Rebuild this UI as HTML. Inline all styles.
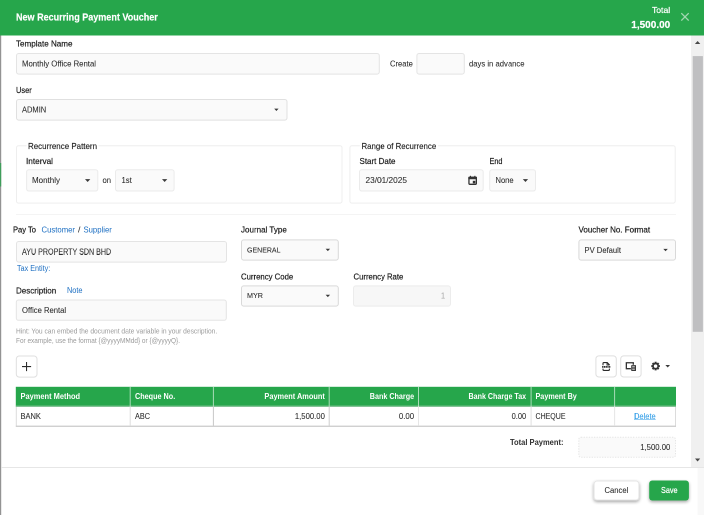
<!DOCTYPE html>
<html>
<head>
<meta charset="utf-8">
<title>New Recurring Payment Voucher</title>
<style>
*{box-sizing:border-box;margin:0;padding:0}
html,body{width:704px;height:515px;overflow:hidden;background:#fff}
body{font-family:"Liberation Sans",sans-serif;font-size:9px;color:#222;position:relative}
.a{position:absolute}
.t{position:absolute;white-space:nowrap;line-height:1;display:block}
.b{font-weight:bold}
.m{-webkit-text-stroke:0.2px currentColor}
.l{-webkit-text-stroke:0.13px currentColor;color:#222}
.s{-webkit-text-stroke:0.2px currentColor}
.x{color:#2c2c2c;-webkit-text-stroke:0.07px currentColor}
.m{color:#1c1c1c}
.w{color:#fff}
.k{color:#1b6ec2}
.h{color:#9b9b9b}
.g{color:#a8a8a8}
.d{color:#2397e6;text-decoration:underline}
</style>
</head>
<body>
<div id="root" style="position:absolute;left:0;top:0;width:1408px;height:1030px;overflow:hidden;transform-origin:0 0;transform:scale(0.5);will-change:transform;">
<div style="position:absolute;left:0;top:0;width:704px;height:515px;zoom:2">
<svg style="position:absolute;left:0;top:0" width="704" height="515" viewBox="0 0 704 515">
<defs><filter id="sh" x="-20%" y="-30%" width="140%" height="180%"><feDropShadow dx="0" dy="1.5" stdDeviation="1.7" flood-color="#000" flood-opacity="0.36"/></filter></defs>
<rect x="0.00" y="0.00" width="704.00" height="35.50" rx="0" fill="#26a64b"/>
<path d="M681.3 13.2L688.7 20.6M688.7 13.2L681.3 20.6" stroke="#a3d8b2" stroke-width="1.3" fill="none"/>
<rect x="0.00" y="35.50" width="1.20" height="479.50" rx="0" fill="#939393"/>
<rect x="0.00" y="163.00" width="1.20" height="23.50" rx="0" fill="#3f9d5b"/>
<rect x="691.00" y="35.50" width="13.00" height="431.50" rx="0" fill="#f0f0f0"/>
<rect x="692.70" y="56.10" width="10.20" height="275.70" rx="0" fill="#bfbfc1"/>
<path d="M694.9 44L697.6 41L700.3 44z" fill="#484848"/>
<path d="M695 458.5L697.6 461.5L700.2 458.5z" fill="#484848"/>
<rect x="16.50" y="53.50" width="362.80" height="20.60" rx="2.2" fill="#fafafa" stroke="#e4e4e4" stroke-width="1" />
<rect x="416.90" y="53.50" width="47.40" height="20.60" rx="2.2" fill="#fafafa" stroke="#e4e4e4" stroke-width="1" />
<rect x="16.50" y="99.50" width="270.50" height="20.60" rx="2.2" fill="#fafafa" stroke="#e0e0e0" stroke-width="1" />
<path d="M274.20 108.60h4.4l-2.20 2.4z" fill="#3a3a3a"/>
<rect x="16.50" y="145.80" width="325.50" height="57.30" rx="2" fill="none" stroke="#eeeeee" stroke-width="1" />
<rect x="26.50" y="144.00" width="72.00" height="4.00" rx="0" fill="#fff"/>
<rect x="349.90" y="145.80" width="325.30" height="57.30" rx="2" fill="none" stroke="#eeeeee" stroke-width="1" />
<rect x="359.90" y="144.00" width="78.10" height="4.00" rx="0" fill="#fff"/>
<rect x="26.60" y="169.70" width="71.20" height="21.30" rx="2.2" fill="#fafafa" stroke="#ebebeb" stroke-width="1" />
<path d="M85.00 179.10h5.3l-2.65 2.9z" fill="#3a3a3a"/>
<rect x="115.50" y="169.70" width="58.60" height="21.30" rx="2.2" fill="#fafafa" stroke="#ebebeb" stroke-width="1" />
<path d="M162.00 179.10h5.3l-2.65 2.9z" fill="#3a3a3a"/>
<rect x="359.50" y="169.70" width="123.70" height="21.30" rx="2.2" fill="#fafafa" stroke="#ebebeb" stroke-width="1" />
<rect x="489.70" y="169.70" width="45.80" height="21.30" rx="2.2" fill="#fafafa" stroke="#ebebeb" stroke-width="1" />
<path d="M522.80 179.10h5.3l-2.65 2.9z" fill="#3a3a3a"/>
<g transform="translate(468.3 175.8)"><rect x="0.65" y="1.5" width="7.4" height="7" rx="0.9" fill="none" stroke="#333" stroke-width="1.3"/><rect x="0" y="0.9" width="8.7" height="2.5" rx="0.7" fill="#333"/><rect x="1.6" y="0" width="1.1" height="1.6" fill="#333"/><rect x="6" y="0" width="1.1" height="1.6" fill="#333"/><rect x="4.5" y="5" width="2.5" height="2.5" fill="#333"/></g>
<rect x="16.00" y="214.00" width="660.00" height="1.00" rx="0" fill="#f4f4f4"/>
<rect x="16.50" y="241.50" width="210.00" height="20.60" rx="2.2" fill="#fafafa" stroke="#e4e4e4" stroke-width="1" />
<rect x="241.50" y="239.90" width="96.80" height="20.20" rx="2.2" fill="#fafafa" stroke="#d9d9d9" stroke-width="1" />
<path d="M325.60 248.80h4.5l-2.25 2.3z" fill="#3a3a3a"/>
<rect x="578.90" y="239.90" width="96.60" height="20.20" rx="2.2" fill="#fafafa" stroke="#d9d9d9" stroke-width="1" />
<path d="M663.30 248.90h4.5l-2.25 2.3z" fill="#3a3a3a"/>
<rect x="241.50" y="285.90" width="96.80" height="20.20" rx="2.2" fill="#fafafa" stroke="#d9d9d9" stroke-width="1" />
<path d="M325.60 294.80h4.5l-2.25 2.3z" fill="#3a3a3a"/>
<rect x="353.50" y="285.90" width="97.00" height="20.20" rx="2.2" fill="#f7f7f7" stroke="#ececec" stroke-width="1" />
<rect x="16.30" y="300.00" width="210.00" height="20.30" rx="2.2" fill="#fafafa" stroke="#e4e4e4" stroke-width="1" />
<rect x="16.30" y="356.00" width="20.70" height="21.10" rx="3" fill="#fff" stroke="#dfdfdf" stroke-width="1" />
<path d="M26.55 362V371.1M22 366.55H31.1" stroke="#2a2a2a" stroke-width="1.05" fill="none"/>
<rect x="595.90" y="355.90" width="20.40" height="21.10" rx="3" fill="#fff" stroke="#dfdfdf" stroke-width="1" />
<rect x="620.70" y="355.90" width="20.40" height="21.10" rx="3" fill="#fff" stroke="#dfdfdf" stroke-width="1" />
<g transform="translate(601.7 362)" fill="none" stroke="#2a2a2a"><path d="M1.3 3.2V1.5Q1.3 0.6 2.2 0.6H5.5L7.7 2.8V3.2" stroke-width="1.1"/><path d="M5.3 0.8V3H7.5" stroke-width="0.9"/><path d="M1.3 6.6V7.5Q1.3 8.4 2.2 8.4H6.8Q7.7 8.4 7.7 7.5V6.6" stroke-width="1.1"/><path d="M0.4 4.9H8.6" stroke-width="1.7" stroke-dasharray="1.3 0.45"/></g>
<g transform="translate(625.7 362)"><path d="M5.2 6.7H0.65V0.75H7.6V2.8" fill="none" stroke="#333" stroke-width="1.3"/><rect x="5.5" y="3.1" width="4.6" height="5.9" rx="0.6" fill="#3a3a3a"/><path d="M6.5 4.6H9.1M6.5 6H9.1M6.5 7.4H9.1" stroke="#d8d8d8" stroke-width="0.7"/></g>
<g transform="translate(655.6 366.1)"><circle r="2.6" fill="none" stroke="#333" stroke-width="1.7"/><g stroke="#333" stroke-width="2"><path d="M0 -4.3V-3M0 4.3V3M-4.3 0H-3M4.3 0H3M-3.05 -3.05L-2.1 -2.1M3.05 3.05L2.1 2.1M-3.05 3.05L-2.1 2.1M3.05 -3.05L2.1 -2.1"/></g></g>
<path d="M665.40 365.00h4.6l-2.30 2.5z" fill="#3a3a3a"/>
<rect x="15.80" y="386.80" width="660.20" height="19.50" rx="0" fill="#26a64b"/>
<rect x="16.3" y="406.3" width="659.2" height="19.9" fill="#fff" stroke="#dcdcdc" stroke-width="1"/>
<rect x="15.80" y="406.30" width="660.20" height="0.50" rx="0" fill="#26a64b"/>
<path d="M15.80 426.20L676.00 426.20" stroke="#c6c6c6" stroke-width="1" fill="none"/>
<path d="M130.20 386.80L130.20 406.30" stroke="#a9dcb8" stroke-width="1" fill="none"/>
<path d="M130.20 406.30L130.20 425.80" stroke="#dedede" stroke-width="1" fill="none"/>
<path d="M213.40 386.80L213.40 406.30" stroke="#a9dcb8" stroke-width="1" fill="none"/>
<path d="M213.40 406.30L213.40 425.80" stroke="#c8c8c8" stroke-width="1" fill="none"/>
<path d="M329.20 386.80L329.20 406.30" stroke="#a9dcb8" stroke-width="1" fill="none"/>
<path d="M329.20 406.30L329.20 425.80" stroke="#cecece" stroke-width="1" fill="none"/>
<path d="M418.50 386.80L418.50 406.30" stroke="#a9dcb8" stroke-width="1" fill="none"/>
<path d="M418.50 406.30L418.50 425.80" stroke="#e6e6e6" stroke-width="1" fill="none"/>
<path d="M531.10 386.80L531.10 406.30" stroke="#a9dcb8" stroke-width="1" fill="none"/>
<path d="M531.10 406.30L531.10 425.80" stroke="#e0e0e0" stroke-width="1" fill="none"/>
<path d="M614.60 386.80L614.60 406.30" stroke="#a9dcb8" stroke-width="1" fill="none"/>
<path d="M614.60 406.30L614.60 425.80" stroke="#e6e6e6" stroke-width="1" fill="none"/>
<rect x="578.80" y="437.30" width="96.70" height="20.00" rx="2.2" fill="#fafafa" stroke="#e5e5e5" stroke-width="1" stroke-dasharray="1.3 1.3"/>
<rect x="1.20" y="467.00" width="702.80" height="1.00" rx="0" fill="#e6e6e6"/>
<rect x="697.50" y="468.00" width="6.50" height="47.00" rx="0" fill="#f8f8f8"/>
<rect x="594.1" y="481" width="44.8" height="19" rx="3" fill="#fff" stroke="#e6e6e6" stroke-width="1" filter="url(#sh)"/>
<rect x="649.2" y="480.5" width="39.7" height="20" rx="3" fill="#26a64b" filter="url(#sh)"/>
</svg>
<span class="t b w s" style="top:11.77px;font-size:10.2px;left:16.00px;transform-origin:0 0;transform:scaleX(0.8854);">New Recurring Payment Voucher</span>
<span class="t m w" style="top:6.22px;font-size:8.6px;right:34.00px;transform-origin:100% 0;transform:scaleX(1.0024);">Total</span>
<span class="t b w s" style="top:20.09px;font-size:9.7px;right:34.00px;transform-origin:100% 0;transform:scaleX(1.0333);">1,500.00</span>
<span class="t m" style="top:39.66px;font-size:8.2px;left:16.00px;transform-origin:0 0;transform:scaleX(0.9843);">Template Name</span>
<span class="t x" style="top:60.07px;font-size:8.3px;left:22.00px;transform-origin:0 0;transform:scaleX(0.9347);">Monthly Office Rental</span>
<span class="t x" style="top:60.07px;font-size:8.3px;left:390.00px;transform-origin:0 0;transform:scaleX(0.9154);">Create</span>
<span class="t x" style="top:60.07px;font-size:8.3px;left:469.00px;transform-origin:0 0;transform:scaleX(0.9255);">days in advance</span>
<span class="t m" style="top:86.06px;font-size:8.2px;left:16.00px;transform-origin:0 0;transform:scaleX(0.9130);">User</span>
<span class="t x" style="top:105.87px;font-size:8.3px;left:22.00px;transform-origin:0 0;transform:scaleX(0.9052);">ADMIN</span>
<span class="t l" style="top:142.06px;font-size:8.2px;left:28.00px;transform-origin:0 0;transform:scaleX(0.9710);">Recurrence Pattern</span>
<span class="t m" style="top:157.06px;font-size:8.2px;left:26.00px;transform-origin:0 0;transform:scaleX(1.0047);">Interval</span>
<span class="t x" style="top:176.67px;font-size:8.3px;left:32.00px;transform-origin:0 0;transform:scaleX(0.9637);">Monthly</span>
<span class="t x" style="top:176.67px;font-size:8.3px;left:102.50px;transform-origin:0 0;transform:scaleX(0.9205);">on</span>
<span class="t x" style="top:176.67px;font-size:8.3px;left:121.50px;transform-origin:0 0;transform:scaleX(0.9304);">1st</span>
<span class="t l" style="top:142.06px;font-size:8.2px;left:361.50px;transform-origin:0 0;transform:scaleX(0.9588);">Range of Recurrence</span>
<span class="t m" style="top:157.06px;font-size:8.2px;left:359.50px;transform-origin:0 0;transform:scaleX(0.9757);">Start Date</span>
<span class="t m" style="top:157.06px;font-size:8.2px;left:489.50px;transform-origin:0 0;transform:scaleX(0.8913);">End</span>
<span class="t x" style="top:176.67px;font-size:8.3px;left:365.50px;transform-origin:0 0;transform:scaleX(0.9992);">23/01/2025</span>
<span class="t x" style="top:176.67px;font-size:8.3px;left:495.30px;transform-origin:0 0;transform:scaleX(0.9125);">None</span>
<span class="t m" style="top:225.66px;font-size:8.2px;left:13.00px;transform-origin:0 0;transform:scaleX(0.9235);">Pay To</span>
<span class="t k" style="top:225.66px;font-size:8.2px;left:41.50px;transform-origin:0 0;transform:scaleX(0.9430);">Customer</span>
<span class="t x" style="top:225.66px;font-size:8.2px;left:78.20px;transform-origin:0 0;transform:scaleX(1.0521);">/</span>
<span class="t k" style="top:225.66px;font-size:8.2px;left:83.50px;transform-origin:0 0;transform:scaleX(0.9411);">Supplier</span>
<span class="t x" style="top:247.87px;font-size:8.3px;left:22.00px;transform-origin:0 0;transform:scaleX(0.8598);">AYU PROPERTY SDN BHD</span>
<span class="t k" style="top:264.40px;font-size:7.8px;left:17.00px;transform-origin:0 0;transform:scaleX(0.9230);">Tax Entity:</span>
<span class="t m" style="top:286.66px;font-size:8.2px;left:16.00px;transform-origin:0 0;transform:scaleX(0.9805);">Description</span>
<span class="t k" style="top:286.06px;font-size:8.2px;left:67.00px;transform-origin:0 0;transform:scaleX(0.8953);">Note</span>
<span class="t x" style="top:306.67px;font-size:8.3px;left:22.00px;transform-origin:0 0;transform:scaleX(0.9224);">Office Rental</span>
<span class="t h" style="top:327.62px;font-size:7.3px;left:16.00px;transform-origin:0 0;transform:scaleX(0.9118);">Hint: You can embed the document date variable in your description.</span>
<span class="t h" style="top:337.02px;font-size:7.3px;left:16.00px;transform-origin:0 0;transform:scaleX(0.8839);">For example, use the format {@yyyyMMdd} or {@yyyyQ}.</span>
<span class="t m" style="top:225.26px;font-size:8.2px;left:241.20px;transform-origin:0 0;transform:scaleX(0.9790);">Journal Type</span>
<span class="t x" style="top:246.18px;font-size:7.7px;left:247.00px;transform-origin:0 0;transform:scaleX(0.9108);">GENERAL</span>
<span class="t m" style="top:272.46px;font-size:8.2px;left:241.20px;transform-origin:0 0;transform:scaleX(0.9471);">Currency Code</span>
<span class="t x" style="top:291.68px;font-size:7.7px;left:247.00px;transform-origin:0 0;transform:scaleX(0.9356);">MYR</span>
<span class="t m" style="top:272.46px;font-size:8.2px;left:353.40px;transform-origin:0 0;transform:scaleX(0.9425);">Currency Rate</span>
<span class="t g" style="top:292.07px;font-size:8.3px;right:259.10px;transform-origin:100% 0;transform:scaleX(0.9313);">1</span>
<span class="t m" style="top:225.26px;font-size:8.2px;left:578.40px;transform-origin:0 0;transform:scaleX(0.9763);">Voucher No. Format</span>
<span class="t x" style="top:246.37px;font-size:8.3px;left:584.70px;transform-origin:0 0;transform:scaleX(0.9202);">PV Default</span>
<span class="t b w" style="top:392.60px;font-size:7.8px;left:20.50px;transform-origin:0 0;transform:scaleX(0.9554);">Payment Method</span>
<span class="t b w" style="top:392.60px;font-size:7.8px;left:135.00px;transform-origin:0 0;transform:scaleX(0.9280);">Cheque No.</span>
<span class="t b w" style="top:392.60px;font-size:7.8px;right:379.20px;transform-origin:100% 0;transform:scaleX(0.9463);">Payment Amount</span>
<span class="t b w" style="top:392.60px;font-size:7.8px;right:289.90px;transform-origin:100% 0;transform:scaleX(0.9210);">Bank Charge</span>
<span class="t b w" style="top:392.60px;font-size:7.8px;right:177.90px;transform-origin:100% 0;transform:scaleX(0.9126);">Bank Charge Tax</span>
<span class="t b w" style="top:392.60px;font-size:7.8px;left:535.70px;transform-origin:0 0;transform:scaleX(0.9252);">Payment By</span>
<span class="t x" style="top:412.40px;font-size:7.8px;left:20.50px;transform-origin:0 0;transform:scaleX(0.9607);">BANK</span>
<span class="t x" style="top:412.40px;font-size:7.8px;left:135.00px;transform-origin:0 0;transform:scaleX(0.9352);">ABC</span>
<span class="t x" style="top:412.40px;font-size:7.8px;right:379.20px;transform-origin:100% 0;transform:scaleX(0.9884);">1,500.00</span>
<span class="t x" style="top:412.40px;font-size:7.8px;right:289.90px;transform-origin:100% 0;transform:scaleX(1.0079);">0.00</span>
<span class="t x" style="top:412.40px;font-size:7.8px;right:177.90px;transform-origin:100% 0;transform:scaleX(0.9618);">0.00</span>
<span class="t x" style="top:412.40px;font-size:7.8px;left:535.70px;transform-origin:0 0;transform:scaleX(0.8993);">CHEQUE</span>
<span class="t d" style="top:412.40px;font-size:7.8px;left:633.80px;transform-origin:0 0;transform:scaleX(0.9628);">Delete</span>
<span class="t b" style="top:438.60px;font-size:7.8px;left:510.20px;transform-origin:0 0;transform:scaleX(0.9672);color:#303030;">Total Payment:</span>
<span class="t x" style="top:443.27px;font-size:8.3px;right:33.90px;transform-origin:100% 0;transform:scaleX(0.9320);">1,500.00</span>
<span class="t x" style="top:486.57px;font-size:8.3px;left:604.50px;transform-origin:0 0;transform:scaleX(0.9215);">Cancel</span>
<span class="t m w" style="top:486.57px;font-size:8.3px;left:660.80px;transform-origin:0 0;transform:scaleX(0.8777);">Save</span>
</div>
</div>
</body>
</html>
